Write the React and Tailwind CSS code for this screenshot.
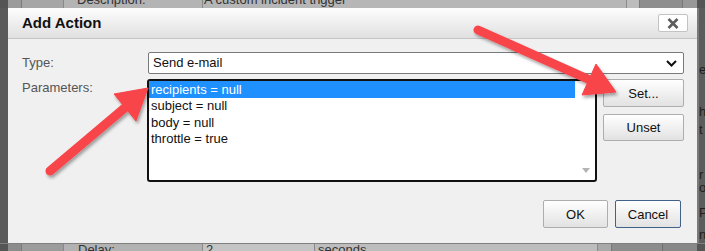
import React from 'react';

const Btn = ({ children, className = '' }) => (
  <button
    className={`flex shrink-0 items-center justify-center rounded-[2px] border bg-linear-to-b from-white to-[#e2e2e2] text-[13px] leading-none text-[#111] ${className}`}
  >
    {children}
  </button>
);

const Arrows = () => (
  <svg className="pointer-events-none absolute inset-0" width="705" height="251" viewBox="0 0 705 251">
    <defs>
      <filter id="sh" x="-20%" y="-20%" width="140%" height="140%">
        <feDropShadow dx="1.5" dy="2.5" stdDeviation="1.6" floodColor="#000" floodOpacity="0.35" />
      </filter>
    </defs>
    <g filter="url(#sh)" fill="#f8444a" stroke="#f8444a">
      <line x1="50" y1="171" x2="127" y2="106" strokeWidth="9" strokeLinecap="round" />
      <polygon points="148,88 136,121 114,94" strokeWidth="1" strokeLinejoin="round" />
      <line x1="478" y1="30" x2="590" y2="80" strokeWidth="9" strokeLinecap="round" />
      <polygon points="616,92 582,95 596,64" strokeWidth="1" strokeLinejoin="round" />
    </g>
  </svg>
);

const rows = ['recipients = null', 'subject = null', 'body = null', 'throttle = true'];

export default function App() {
  return (
    <div className="relative flex h-[251px] w-[705px] flex-col overflow-hidden bg-[#595959] font-['Liberation_Sans',Arial,sans-serif]">
      {/* page behind the dialog, top */}
      <div className="flex h-[8px] shrink-0 text-[13px] leading-[16px] text-[#333]">
        <div className="w-[8px] shrink-0 bg-[#555]" />
        <div className="w-[14px] shrink-0 border-r border-[#7c7c7c] bg-[#9b9b9b]" />
        <div className="w-[42px] shrink-0 border-r border-[#888] bg-[#a6a6a6]" />
        <div className="w-[139px] shrink-0 overflow-hidden border-r border-[#8a8a8a] bg-[#b4b4b4] pl-[13px]">
          <div className="-mt-[8px] whitespace-nowrap">Description:</div>
        </div>
        <div className="w-[424px] shrink-0 overflow-hidden border-r border-[#8a8a8a] bg-[#b6b6b6] pl-[1px]">
          <div className="-mt-[8px] whitespace-nowrap">A custom incident trigger</div>
        </div>
        <div className="w-[13px] shrink-0 border-r border-[#7a7a7a] bg-[#bcbcbc]" />
        <div className="w-[43px] shrink-0 border-r border-[#777] bg-[#8e8e8e]" />
        <div className="w-[14px] shrink-0 bg-[#989898]" />
        <div className="w-[8px] shrink-0 bg-[#555]" />
      </div>

      <div className="flex h-[235px] shrink-0">
        <div className="w-[8px] shrink-0 bg-[#5a5a5a]" />

        {/* dialog */}
        <div className="flex w-[689px] shrink-0 flex-col bg-[#f0f0f0]">
          <div className="flex h-[31px] shrink-0 items-center justify-between border-b border-[#c6c6c6] bg-linear-to-b from-[#fdfdfd] to-[#e0e0e0] pl-[14px] pr-[9px]">
            <span className="text-[15px] font-bold text-[#111]">Add Action</span>
            <button className="flex h-[18px] w-[30px] items-center justify-center rounded-[2px] border border-[#c3c3c3] bg-white">
              <svg width="12" height="11" viewBox="0 0 12 11">
                <path d="M1.5 1l9 9M10.5 1l-9 9" stroke="#5e5e5e" strokeWidth="2.6" />
              </svg>
            </button>
          </div>

          <div className="flex flex-1 flex-col pl-[14px] pr-[13px] pt-[13px] text-[13px] leading-[16px]">
            <div className="flex h-[22px] items-center">
              <div className="w-[126px] shrink-0 text-[#555]">Type:</div>
              <div className="flex h-[22px] flex-1 items-center justify-between rounded-[2px] border border-[#7a7a7a] bg-white pl-[4px] pr-[6px] text-[#111]">
                <span>Send e-mail</span>
                <svg width="11" height="7" viewBox="0 0 11 7">
                  <path d="M1 1l4.5 4.5L10 1" fill="none" stroke="#111" strokeWidth="2" />
                </svg>
              </div>
            </div>

            <div className="mt-[5px] flex">
              <div className="w-[125px] shrink-0 pt-[1px] text-[#555]">Parameters:</div>
              <div className="flex h-[103px] w-[450px] shrink-0 rounded-[3px] border-2 border-[#111] bg-white">
                <div className="flex-1 text-[#111]">
                  {rows.map((r, i) => (
                    <div
                      key={r}
                      className={
                        i === 0
                          ? 'h-[17px] bg-[#1e90ff] pl-[2px] leading-[17px] text-white'
                          : 'h-[16.5px] pl-[2px] leading-[16.5px]'
                      }
                    >
                      {r}
                    </div>
                  ))}
                </div>
                <div className="flex w-[20px] shrink-0 flex-col items-center justify-end pb-[7px] pl-[2px]">
                  <svg width="8" height="5" viewBox="0 0 8 5">
                    <path d="M0 0h8L4 5z" fill="#b4b4b4" />
                  </svg>
                </div>
              </div>
              <div className="ml-[6px] flex w-[81px] shrink-0 flex-col gap-[7px]">
                <Btn className="h-[28px] w-[81px] border-[#adadad]">Set...</Btn>
                <Btn className="h-[27px] w-[81px] border-[#adadad]">Unset</Btn>
              </div>
            </div>

            <div className="mt-[18px] flex justify-end gap-[7px] pr-[3px]">
              <Btn className="h-[28px] w-[65px] border-[#adadad]">OK</Btn>
              <Btn className="h-[28px] w-[66px] border-[#42618a]">Cancel</Btn>
            </div>
          </div>
        </div>

        {/* page behind the dialog, right */}
        <div className="w-[8px] shrink-0 overflow-hidden border-l-2 border-[#7a7a7a] bg-[#5c5c5c] text-[13px] leading-[13px] text-[#1e1e1e]">
          <div className="mt-[55px]">e</div>
          <div className="mt-[29px]">h</div>
          <div className="mt-[5px]">t</div>
          <div className="mt-[32px]">r</div>
          <div>o</div>
          <div className="mt-[12px]">P</div>
          <div className="mt-[9px]">n</div>
        </div>
      </div>

      {/* page behind the dialog, bottom */}
      <div className="flex h-[8px] shrink-0 border-t border-[#808080] text-[13px] leading-[16px] text-[#333]">
        <div className="w-[8px] shrink-0 bg-[#555]" />
        <div className="w-[14px] shrink-0 border-r border-[#7c7c7c] bg-[#8c8c8c]" />
        <div className="w-[42px] shrink-0 border-r border-[#888] bg-[#9c9c9c]" />
        <div className="w-[139px] shrink-0 overflow-hidden border-r border-[#8a8a8a] bg-[#b2b2b2] pl-[14px]">
          <div className="-mt-[2px] whitespace-nowrap">Delay:</div>
        </div>
        <div className="w-[112px] shrink-0 overflow-hidden border-r border-[#8a8a8a] bg-[#c4c4c4] pl-[3px]">
          <div className="-mt-[2px]">2</div>
        </div>
        <div className="w-[283px] shrink-0 overflow-hidden border-r border-[#8a8a8a] bg-[#bdbdbd] pl-[3px]">
          <div className="-mt-[2px] whitespace-nowrap">seconds</div>
        </div>
        <div className="w-[14px] shrink-0 border-r border-[#777] bg-[#a9a9a9]" />
        <div className="w-[51px] shrink-0 border-r border-[#6e6e6e] bg-[#8c8c8c]" />
        <div className="w-[34px] shrink-0 bg-[#888]" />
        <div className="w-[8px] shrink-0 bg-[#555]" />
      </div>

      <Arrows />
    </div>
  );
}
